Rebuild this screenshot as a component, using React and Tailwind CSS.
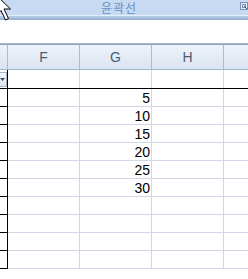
export default function App() {
  const rows = [5, 10, 15, 20, 25, 30, null, null, null, null];

  return (
    <div className="relative w-[248px] h-[279px] overflow-hidden bg-white font-['Liberation_Sans',sans-serif]">
      {/* ribbon group label strip */}
      <div className="relative h-[15px] bg-[#c7daf1] flex items-center">
        <span className="ml-[101px] text-[12px] leading-[15px] tracking-[1px] text-[#6a8dc2] font-['Noto_Sans_CJK_KR',sans-serif]">
          윤곽선
        </span>
        <svg className="absolute left-[240px] top-[2px]" width="8" height="8" viewBox="0 0 8 8">
          <rect x="0.5" y="0.5" width="7" height="7" fill="#e8eef7" stroke="#7d93b2" />
          <rect x="2.5" y="2.5" width="3" height="3" fill="none" stroke="#7d93b2" />
          <path d="M4 4 L7 7" stroke="#3d5273" />
        </svg>
      </div>
      <div className="h-[1px] bg-[#e4f0fd]" />
      <div className="h-[2px] bg-[#b4c9e4]" />
      <div className="h-[2px] bg-[#9cb3d2]" />

      {/* formula bar area */}
      <div className="h-[23px] bg-white" />
      <div className="h-[1px] bg-[#a6b7cc]" />
      <div className="h-[1px] bg-[#8fa3bc]" />

      {/* column headers */}
      <div className="flex h-[25px] border-b border-[#9eb6ce] bg-gradient-to-b from-[#eef3fa] to-[#dbe4f0] text-[14px] text-[#4b5d77]">
        <div className="w-[8px] border-r border-[#a9bdd4]" />
        {["F", "G", "H"].map((c) => (
          <div key={c} className="w-[72px] border-r border-[#a9bdd4] flex items-center justify-center">
            {c}
          </div>
        ))}
        <div className="flex-1" />
      </div>

      {/* row 1 with filter button */}
      <div className="flex h-[19px] border-b border-black">
        <div className="w-[8px] border-r border-black pt-[2px]">
          <div className="w-[7px] h-[15px] border border-l-0 border-[#a4b4ca] bg-gradient-to-b from-[#f4f7fb] to-[#dfe6ef] flex items-center">
            <svg width="6" height="4" viewBox="0 0 6 4">
              <path d="M0 0 H5 L2.5 3 Z" fill="#3f4f66" />
            </svg>
          </div>
        </div>
        <div className="w-[72px] border-r border-[#d0d7e5]" />
        <div className="w-[72px] border-r border-[#d0d7e5]" />
        <div className="w-[72px] border-r border-[#d0d7e5]" />
        <div className="flex-1" />
      </div>

      {/* data rows */}
      {rows.map((v, i) => (
        <div key={i} className="flex h-[18px] text-[14px] text-black">
          <div className="w-[8px] border-r border-b border-black" />
          <div className="w-[72px] border-r border-b border-[#d0d7e5]" />
          <div className="w-[72px] border-r border-b border-[#d0d7e5] flex items-end justify-end pr-[1px] leading-[16px]">
            {v}
          </div>
          <div className="w-[72px] border-r border-b border-[#d0d7e5]" />
          <div className="flex-1 border-b border-[#d0d7e5]" />
        </div>
      ))}

      {/* mouse pointer, tip off-screen */}
      <svg className="absolute left-[-4px] top-[-5px]" width="16" height="27" viewBox="0 0 16 27">
        <path d="M0.5 0.5 L0.5 20 L5 15.5 L9.5 25 L12.5 23.5 L8 14 L14.5 14 Z" fill="white" stroke="black" strokeWidth="1" strokeLinejoin="miter" />
      </svg>
    </div>
  );
}
